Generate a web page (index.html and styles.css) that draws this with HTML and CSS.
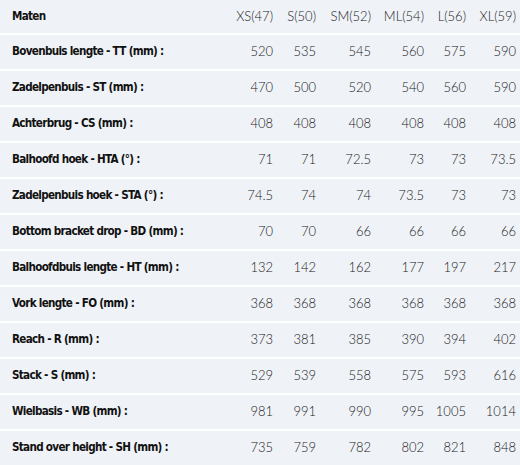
FILE: index.html
```html
<!DOCTYPE html>
<html>
<head>
<meta charset="utf-8">
<link rel="stylesheet" href="styles.css">
</head>
<body>
<table class="geo">
  <colgroup>
    <col class="c-label"><col class="c-xs"><col class="c-s"><col class="c-sm"><col class="c-ml"><col class="c-l"><col class="c-xl">
  </colgroup>
  <thead>
    <tr class="head"><th>Maten</th><td>XS(47)</td><td>S(50)</td><td>SM(52)</td><td>ML(54)</td><td>L(56)</td><td>XL(59)</td></tr>
  </thead>
  <tbody>
    <tr><th>Bovenbuis lengte - TT (mm) :</th><td>520</td><td>535</td><td>545</td><td>560</td><td>575</td><td>590</td></tr>
    <tr><th>Zadelpenbuis - ST (mm) :</th><td>470</td><td>500</td><td>520</td><td>540</td><td>560</td><td>590</td></tr>
    <tr><th>Achterbrug - CS (mm) :</th><td>408</td><td>408</td><td>408</td><td>408</td><td>408</td><td>408</td></tr>
    <tr><th>Balhoofd hoek - HTA (°) :</th><td>71</td><td>71</td><td>72.5</td><td>73</td><td>73</td><td>73.5</td></tr>
    <tr><th>Zadelpenbuis hoek - STA (°) :</th><td>74.5</td><td>74</td><td>74</td><td>73.5</td><td>73</td><td>73</td></tr>
    <tr><th>Bottom bracket drop - BD (mm) :</th><td>70</td><td>70</td><td>66</td><td>66</td><td>66</td><td>66</td></tr>
    <tr><th>Balhoofdbuis lengte - HT (mm) :</th><td>132</td><td>142</td><td>162</td><td>177</td><td>197</td><td>217</td></tr>
    <tr><th>Vork lengte - FO (mm) :</th><td>368</td><td>368</td><td>368</td><td>368</td><td>368</td><td>368</td></tr>
    <tr><th>Reach - R (mm) :</th><td>373</td><td>381</td><td>385</td><td>390</td><td>394</td><td>402</td></tr>
    <tr><th>Stack - S (mm) :</th><td>529</td><td>539</td><td>558</td><td>575</td><td>593</td><td>616</td></tr>
    <tr><th>Wielbasis - WB (mm) :</th><td>981</td><td>991</td><td>990</td><td>995</td><td>1005</td><td>1014</td></tr>
    <tr><th>Stand over height - SH (mm) :</th><td>735</td><td>759</td><td>782</td><td>802</td><td>821</td><td>848</td></tr>
  </tbody>
</table>
</body>
</html>
```
FILE: styles.css
```css
html, body {
  margin: 0;
  padding: 0;
  background: #ffffff;
}
.geo {
  width: 520px;
  border-collapse: collapse;
  table-layout: fixed;
  background: #eff2f7;
}
.c-label { width: 220px; }
.c-xs { width: 57px; }
.c-s { width: 43px; }
.c-sm { width: 55px; }
.c-ml { width: 53px; }
.c-l { width: 42px; }
.c-xl { width: 50px; }
.geo tr {
  height: 36px;
  border-bottom: 2px solid #ffffff;
}
.geo tr.head {
  height: 34px;
}
.geo th {
  text-align: left;
  padding: 0 0 2px 12px;
  font-family: "DejaVu Sans Condensed", "DejaVu Sans", sans-serif;
  font-weight: bold;
  font-size: 11.6px;
  letter-spacing: -0.7px;
  color: #111111;
  white-space: nowrap;
}
.geo td {
  text-align: right;
  padding: 0 4px 2px 0;
  font-family: Lato, "Liberation Sans", sans-serif;
  font-weight: 300;
  font-size: 13px;
  color: #222222;
  white-space: nowrap;
}
```
